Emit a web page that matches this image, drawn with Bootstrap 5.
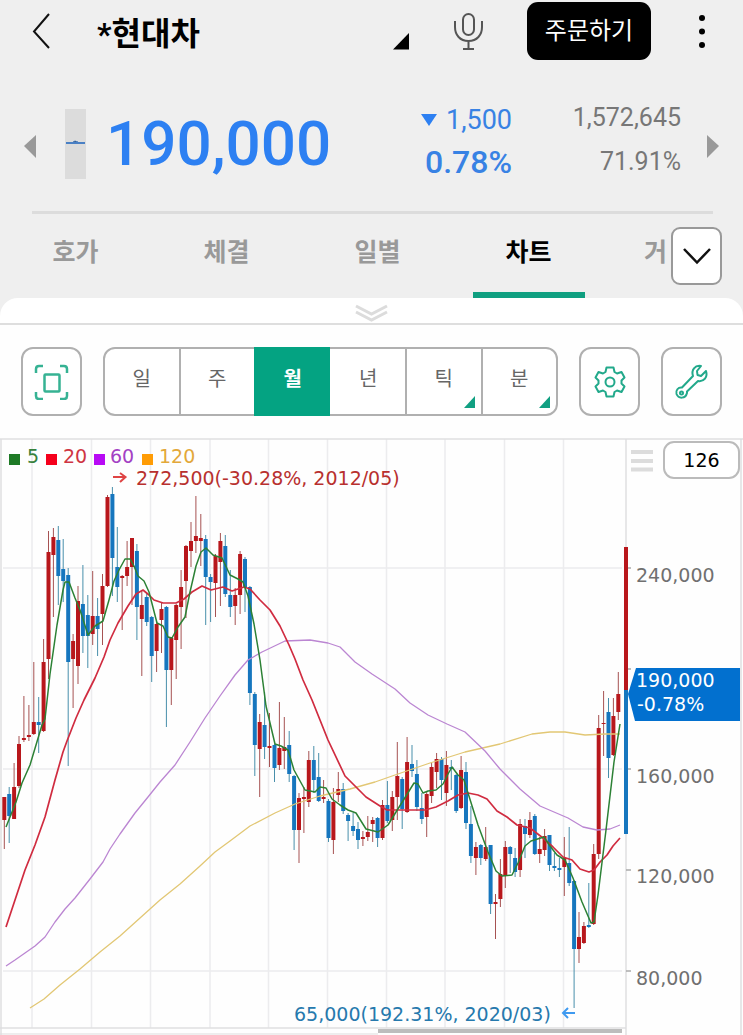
<!DOCTYPE html>
<html lang="ko">
<head>
<meta charset="utf-8">
<meta name="viewport" content="width=device-width, initial-scale=1">
<title>현대차 차트</title>
<link href="https://cdn.jsdelivr.net/npm/bootstrap@5.3.0/dist/css/bootstrap.min.css" rel="stylesheet">
<style>
body{font-family:Roboto,"Noto Sans CJK KR",sans-serif;background:#fefefe;color:#000;overflow-x:hidden}
button{padding:0;border:0;background:none;color:inherit}
svg{display:block}
.app-head{background:#efefef}
.title-row{height:62px;padding:0 36px 0 32px}
.stock-name{font-size:32px;line-height:60px;font-weight:700;margin:4px 0 0 45px}
.stock-name svg{margin-top:-4px}
.mic-btn{margin:0 44px 0 42px}
.order-btn{width:124px;height:58px;border-radius:11px;background:#000;color:#fff;font-size:24px;line-height:54px;margin-top:2px}
.quote-row{height:149px;padding:27px 24px 0}
.mini-candle{width:21px;height:70px;background:#dcdcdc;margin:20px 20px 0 29px}
.price{font-size:62px;line-height:70px;font-weight:500;color:#2d80f2}
.change{color:#3882e4;width:112px;padding-top:10px}
.change-amt{font-size:27px;line-height:42px}
.change-pct{font-size:32px;line-height:42px;font-weight:500}
.volume{color:#777;font-size:25px;line-height:44px;width:140px;margin:7px 0 0 29px}
.rule-line{height:3px;background:#dcdcdc;margin:0 30px 0 32px}
.tabs-row{height:84px}
.tabs-nav{min-width:0}
.tab-link{flex:0 0 151px;font-size:25px;line-height:78px;font-weight:700;color:#999;text-align:center;text-decoration:none;display:block}
.tab-link.active{color:#000}
.tab-link.active::after{content:"";display:block;height:6px;width:112px;margin:0 auto;background:#0f9f80}
.tab-link.cut{text-align:left;padding-left:40px}
.more-btn{width:51px;height:58px;border:2px solid #999;border-radius:9px;background:#fff;margin:13px 21px 0 4px}
.handle{height:27px;background:#fff;border-radius:18px 18px 0 0;border-bottom:2px solid #dedede}
.toolbar{padding:22px 21px;gap:21px}
.tool-btn{flex:0 0 61px;height:69px;border:2px solid #b0b0b0;border-radius:12px;background:#fff}
.period-group{height:69px;border:2px solid #b0b0b0;border-radius:12px;background:#fff}
.period{flex:1 1 0;font-size:20px;line-height:58px;padding-bottom:6px;color:#666;border-left:2px solid #b0b0b0;position:relative}
.period:first-child{border-left:0}
.period.active{background:#04a382;color:#fff;border-color:#04a382;font-weight:700;margin:-2px 0}
.period.active + .period{border-color:#fff}
.corner::after{content:"";position:absolute;right:6px;bottom:6px;border-left:11px solid transparent;border-bottom:12px solid #11a082}
.chart text{font-family:"DejaVu Sans",sans-serif;font-size:19px}
.count-btn{position:absolute;top:3px;right:3px;width:77px;height:38px;border:2px solid #bbb;border-radius:11px;background:#fff;font-family:"DejaVu Sans",sans-serif;font-size:19px}
</style>
</head>
<body>
<header class="app-head">
  <div class="title-row d-flex align-items-start">
    <button aria-label="뒤로"><svg width="20" height="62" fill="none" stroke="#111" stroke-width="2"><path d="M17 14 2 31.500 17 48"/></svg></button>
    <h1 class="stock-name flex-grow-1"><span class="d-flex justify-content-between align-items-start">*현대차
      <svg width="18" height="62"><path d="M0 49.500H16V33z"/></svg></span></h1>
    <button class="mic-btn" aria-label="음성 검색"><svg width="30" height="62" fill="none" stroke="#555" stroke-width="2"><rect x="10" y="14" width="11" height="21" rx="5.500"/><path d="M2 21v6c0 8 5 14 13.500 14S29 35 29 27v-6M15.500 41v8M10 49h11"/></svg></button>
    <button class="order-btn">주문하기</button>
    <button class="ms-5" aria-label="메뉴"><svg width="8" height="62"><circle cx="3" cy="18" r="3"/><circle cx="3" cy="31.500" r="3"/><circle cx="3" cy="45" r="3"/></svg></button>
  </div>
  <div class="quote-row d-flex align-items-start">
    <button aria-label="이전 종목"><svg width="12" height="114"><path d="M0 57 12 46V69z" fill="#999"/></svg></button>
    <div class="mini-candle flex-shrink-0"><svg width="21" height="70"><path d="M1 34H20" stroke="#4a80c4" stroke-width="2"/><path d="M8 33 10 32 13 33" stroke="#4a80c4"/></svg></div>
    <div class="price flex-grow-1 mt-3 pt-1">190,000</div>
    <div class="change text-end">
      <div class="change-amt d-flex align-items-center justify-content-end"><svg class="me-2" width="18" height="14"><path d="M1 1H17L9 13z" fill="#2d80f2"/></svg>1,500</div>
      <div class="change-pct">0.78%</div>
    </div>
    <div class="volume text-end"><div>1,572,645</div><div>71.91%</div></div>
    <button class="ms-4" aria-label="다음 종목"><svg width="14" height="114"><path d="M14 57 2 46V69z" fill="#999"/></svg></button>
  </div>
  <div class="rule-line"></div>
  <div class="tabs-row d-flex">
    <nav class="tabs-nav d-flex flex-grow-1 overflow-hidden">
      <a class="tab-link" href="#">호가</a><a class="tab-link" href="#">체결</a><a class="tab-link" href="#">일별</a><a class="tab-link active" href="#" aria-current="page">차트</a><a class="tab-link cut" href="#">거</a>
    </nav>
    <button class="more-btn flex-shrink-0" aria-label="더보기"><svg class="m-auto" width="28" height="18" fill="none" stroke="#111" stroke-width="2.500"><path d="M1 2 14 15.500 27 2"/></svg></button>
  </div>
  <div class="handle d-flex justify-content-center"><svg class="mt-1" width="34" height="20" fill="none" stroke="#dcdcdc" stroke-width="3"><path d="M1 4 16.500 12 32 4M1 10 16.500 18 32 10"/></svg></div>
</header>

<main>
  <div class="toolbar d-flex align-items-center">
    <button class="tool-btn" aria-label="전체 화면"><svg class="m-auto" width="36" height="36" fill="none" stroke="#36b293" stroke-width="2.500"><rect x="10.500" y="10.500" width="15" height="17" rx="1"/><path d="M2 9V5q0-3 3-3H9M26 2h4q3 0 3 3V9M2 28v4q0 3 3 3H9M26 35h4q3 0 3-3V28"/></svg></button>
    <div class="period-group d-flex flex-grow-1" role="group" aria-label="주기">
      <button class="period">일</button><button class="period">주</button><button class="period active" aria-pressed="true">월</button><button class="period">년</button><button class="period corner">틱</button><button class="period corner">분</button>
    </div>
    <button class="tool-btn" aria-label="설정"><svg class="m-auto" width="34" height="34" viewBox="0 0 34 34" fill="none" stroke="#22a98b" stroke-width="2" stroke-linejoin="round"><path d="M13.500 2.500h7l1 4.500 2.500 1.500 4.500-1.500 3 5.500-3 3v3l3 3-3 5.500-4.500-1.500-2.500 1.500-1 4.500h-7l-1-4.500-2.500-1.500L5.500 27l-3-5.500 3-3v-3l-3-3L5.500 7 10 8.500 12.500 7z"/><circle cx="17" cy="17" r="4.500"/></svg></button>
    <button class="tool-btn" aria-label="도구"><svg class="m-auto" width="36" height="38" viewBox="0 0 36 38" fill="none" stroke="#22a98b" stroke-width="2" stroke-linejoin="round"><path d="M27 3c-6-1-10 4-8 10L8 24.500c-4-.5-6.500 3-5.500 6.500 2 5 9 5 10.500-1v-1.500L24 18c6 1 10-4 8-10l-5 5-3.500-1-.5-4z"/><circle cx="7.500" cy="30" r="1.500"/></svg></button>
  </div>

  <section class="position-relative">
    <svg class="chart w-100 h-auto" viewBox="0 438 743 597" role="img" aria-label="현대차 월봉 차트">
      <path d="M32 439V1028M91.500 439V1028M150.500 439V1028M210 439V1028M268.500 439V1028M327.500 439V1028M386.500 439V1028M445 439V1028M504.500 439V1028M563.500 439V1028M3 568H622M3 769H622M3 971H622" stroke="#ececee" stroke-width="1.500" fill="none"/>
      <path d="M0 439H743M1 439V1035M626 439V1035M741 439V1035M0 1028H626" stroke="#dfdfe1" stroke-width="1.500" fill="none"/>
      <path d="M626 568h5M626 669h5M626 769h5M626 870h5M626 971h5" stroke="#aaa" stroke-width="1.500"/>
      <g id="candles"></g>
      <g fill="none" stroke-width="1.300" stroke-linejoin="round">
        <path stroke="#e2c774" d="M30 1008 44 999 60 985 80 969 100 952 120 936 140 918 160 900 180 884 200 866 215 852 230 841 250 826 275 813 295 804 320 796 350 789 375 782 395 775 430 763 465 752 500 744 532 734 550 732 565 732 585 735 605 734 620 734"/>
        <path stroke="#bb86d2" d="M6 966 15 960 25 953 35 946 45 937 55 922 65 909 75 898 90 879 103 862 110 849 120 834 135 813 148 797 160 782 175 765 190 742 205 718 220 696 235 675 248 660 262 652 285 641 310 640 328 643 340 647 355 662 372 674 395 689 410 703 428 715 447 724 465 732 485 751 500 769 520 789 540 806 568 818 583 827 597 830 610 829 620 825"/>
        <path stroke="#d02c40" stroke-width="1.700" d="M6 927 15 900 25 870 35 845 45 817 55 780 63 752 67 741 76 718 84 700 95 678 104 657 110 640 118 623 128 606 136 594 143 590 149 595 154 600 163 603 176 603 184 599 192 592 202 586 211 590 223 587 232 591 244 587 250 589 260 600 270 610 280 626 289 645 295 659 303 680 312 700 320 720 328 740 345 776 357 788 366 797 380 806 387 810 400 810 425 810 436 807 448 801 458 795 468 793 478 795 487 799 497 811 507 817 517 825 530 828 543 838 553 847 563 857 572 860 580 869 589 872 594 870 600 862 607 855 613 846 620 838"/>
        <path stroke="#2c8135" stroke-width="1.500" d="M6 827 12 812 16 802 22 783 30 765 36 745 42 725 45 719 50 674 57 625 63 590 65 582 69 582 75 598 80 610 88 635 95 626 103 621 109 600 114 581 119 570 125 559 130 559 134 566 138 576 144 581 149 592 157 623 163 626 168 637 172 638 178 627 185 617 190 592 196 566 201 552 206 548 213 555 222 558 230 575 238 579 243 582 248 596 254 624 260 660 266 706 275 744 281 746 288 750 294 770 305 790 315 792 320 787 326 788 332 799 340 805 348 810 356 813 366 829 378 832 388 825 396 812 406 796 414 783 418 784 423 793 428 791 436 790 443 784 448 774 452 767 458 775 464 780 468 793 478 825 488 852 496 871 502 876 512 875 518 863 525 846 531 841 544 837 550 846 557 855 565 860 573 878 582 902 591 923 594 922 598 895 606 830 614 762 620 724"/>
      </g>
      <path d="M626 547V690" stroke="#b8171c" stroke-width="4"/><path d="M626 690V834" stroke="#1676be" stroke-width="4"/>
      <path d="M628 694 636 668H740V721H635z" fill="#0270cf"/>
      <g fill="#707070"><text x="636" y="582">240,000</text><text x="636" y="783">160,000</text><text x="636" y="883">120,000</text><text x="636" y="985">80,000</text></g>
      <g fill="#fff"><text x="636" y="687">190,000</text><text x="637" y="711">-0.78%</text></g>
      <path d="M9 454h11v11H9z" fill="#1e7a26"/><path d="M46 454h11v11H46z" fill="#f5001c"/><path d="M94 454h11v11H94z" fill="#b80af5"/><path d="M142 454h11v11H142z" fill="#ff9c05"/>
      <text x="27" y="463" fill="#37813c">5</text><text x="63" y="463" fill="#cf3543">20</text><text x="110" y="463" fill="#a341c4">60</text><text x="159" y="463" fill="#e3a83a">120</text>
      <path d="M113 477H125M120 473 125.500 477 120 482" fill="none" stroke="#df4444" stroke-width="2"/>
      <text x="136" y="485" fill="#b8302e">272,500(-30.28%, 2012/05)</text>
      <text x="294" y="1021" fill="#2679ad">65,000(192.31%, 2020/03)</text>
      <path d="M575 1013H563M568 1008 563 1013 568 1018" fill="none" stroke="#3f9af0" stroke-width="2"/>
      <path d="M378 1031H622" stroke="#bdbdbd" stroke-width="4"/><path d="M0 1034H378" stroke="#ddd"/>
      <path d="M631 452h22M631 461h22M631 469.500h22" stroke="#dcdcdc" stroke-width="4"/>
    </svg>
    <button class="count-btn" aria-label="봉 개수">126</button>
  </section>
</main>

<script src="https://cdn.jsdelivr.net/npm/bootstrap@5.3.0/dist/js/bootstrap.bundle.min.js"></script>
<script>
// One monthly candle per entry: direction, high, body top, body bottom, low (chart units)
const months = `R797 797 820 849,B787 794 816 843,R763 787 819 819,R736 744 786 788,R696 738 740 742,R705 735 737 741,R662 722 734 735,B697 722 725 753,R639 662 731 732,R531 552 659 679,R528 537 555 617,B526 540 576 605,B539 569 581 602,B568 575 662 766,R634 641 659 708,R586 601 666 684,B565 604 636 653,B595 615 636 668,R571 616 634 645,B598 616 629 656,R574 586 614 645,R495 497 586 587,B487 494 558 596,B527 567 587 602,R575 576 578 630,R541 567 576 586,R538 538 567 605,B544 551 607 640,R591 605 619 676,B593 597 622 626,B616 617 656 682,R621 624 651 672,R603 609 620 653,B606 607 670 727,R637 638 670 705,R604 605 640 679,R570 587 607 649,R545 546 581 618,R522 541 551 567,R496 536 541 553,R514 538 541 566,B535 539 577 625,B574 577 582 622,R554 556 583 617,R533 541 562 606,B535 546 594 597,B570 595 607 617,R588 595 606 625,R551 554 595 614,B557 559 587 612,B586 587 693 705,B692 694 745 776,R714 722 749 797,B692 725 747 759,R713 746 748 767,B744 745 768 782,R702 748 765 770,R717 747 751 769,B731 745 774 782,B775 776 830 850,R793 798 830 863,R787 797 799 833,R751 760 802 807,B746 760 780 793,B753 777 801 802,R780 797 799 803,B799 801 838 842,R788 802 840 854,R772 789 795 802,B783 789 811 814,B813 815 821 841,B813 826 831 836,B822 829 840 849,R831 837 839 846,R816 832 837 841,R817 820 824 842,B817 818 838 847,R800 805 838 840,B781 805 821 823,R791 797 820 831,R742 776 797 820,B777 779 809 829,R737 762 812 813,B745 764 771 777,B760 774 807 811,B793 808 819 824,R791 794 817 837,R763 767 796 803,R753 759 772 788,B757 759 780 800,R751 765 793 806,B760 767 769 790,B774 775 811 813,R756 770 808 809,B762 772 823 829,B806 824 856 863,R842 847 858 875,B844 845 858 865,R827 847 859 861,B845 845 904 914,R894 902 904 939,R859 874 899 907,R841 847 876 888,B846 847 854 873,B848 858 872 877,R819 824 870 877,B819 826 834 858,R812 820 835 838,B814 816 854 855,R837 849 854 863,R829 836 850 856,B835 835 865 871,B853 866 868 871,B858 868 870 877,R837 858 867 896,B827 863 883 886,B880 881 949 1008,R912 937 949 963,R922 926 943 944,B883 925 927 928,R844 854 924 925,R715 728 854 859,R691 723 724 756,B698 712 758 778,R698 716 755 756,R672 694 712 720`.split(',');
document.getElementById('candles').innerHTML = months.map((m, i) => {
  const up = m[0] === 'R', [h, t, b, l] = m.slice(1).split(' ').map(Number);
  const x = (4.3 + 4.912 * i).toFixed(1);
  return `<path d="M${x} ${h}V${l}" stroke="${up ? '#a65252' : '#488fab'}" stroke-width="1"/>` +
         `<path d="M${x} ${t}V${b}" stroke="${up ? '#b8171c' : '#1676be'}" stroke-width="4"/>`;
}).join('');
</script>
</body>
</html>
